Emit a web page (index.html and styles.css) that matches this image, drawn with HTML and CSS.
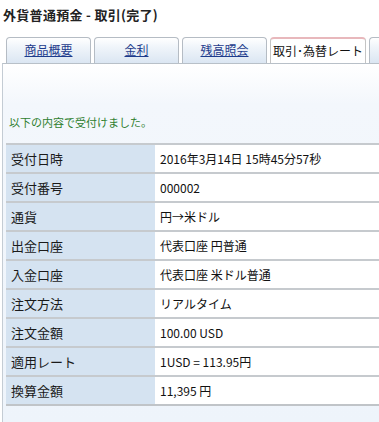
FILE: index.html
```html
<!DOCTYPE html>
<html lang="ja">
<head>
  <meta charset="UTF-8" />
  <title>外貨普通預金 - 取引(完了)</title>
  <link rel="stylesheet" href="styles.css">
</head>
<body>

  <h1 class="title">外貨普通預金 - 取引(完了)</h1>

  <ul class="tabs">
    <li class="tab"><a href="#">商品概要</a></li>
    <li class="tab"><a href="#">金利</a></li>
    <li class="tab"><a href="#">残高照会</a></li>
    <li class="tab active">取引･為替レート</li>
    <li class="tab more"></li>
  </ul>

  <div class="panel">
    <p class="message">以下の内容で受付けました。</p>

    <table class="detail">
      <tr><th>受付日時</th><td>2016年3月14日 15時45分57秒</td></tr>
      <tr><th>受付番号</th><td>000002</td></tr>
      <tr><th>通貨</th><td>円→米ドル</td></tr>
      <tr><th>出金口座</th><td>代表口座 円普通</td></tr>
      <tr><th>入金口座</th><td>代表口座 米ドル普通</td></tr>
      <tr><th>注文方法</th><td>リアルタイム</td></tr>
      <tr><th>注文金額</th><td>100.00 USD</td></tr>
      <tr><th>適用レート</th><td>1USD = 113.95円</td></tr>
      <tr><th>換算金額</th><td>11,395 円</td></tr>
    </table>
  </div>

</body>
</html>
```

FILE: styles.css
```css
* {
  box-sizing: border-box;
}

body {
  margin: 0;
  padding: 0;
  font-family: "Noto Sans CJK JP", "Liberation Sans", sans-serif;
  font-size: 12px;
  color: #111;
  background: #fff;
  overflow: hidden;
}

.title {
  margin: 0;
  padding: 7px 0 0 3px;
  height: 37px;
  font-size: 13px;
  font-weight: bold;
  line-height: 16px;
  letter-spacing: 0.3px;
  color: #222;
}

.tabs {
  list-style: none;
  margin: 0;
  padding: 0 0 0 6px;
  display: flex;
  gap: 3px;
  height: 26px;
  overflow: hidden;
  white-space: nowrap;
}

.tab {
  width: 85px;
  height: 26px;
  border: 1px solid #b5bcc4;
  border-bottom: none;
  border-radius: 4px 4px 0 0;
  background: linear-gradient(#ffffff, #f0f5fa 35%, #dbe6f2);
  text-align: center;
  line-height: 24px;
  font-size: 12px;
  flex-shrink: 0;
}

.tab a {
  color: #1d3b8c;
  text-decoration: underline;
}

.tab.active {
  width: 96px;
  height: 27px;
  background: #fff;
  border-color: #c4c4c4;
  border-top: 2px solid #e8b8bc;
  line-height: 23px;
  position: relative;
  z-index: 1;
}

.tab.more {
  width: 10px;
  flex-shrink: 1;
  border-radius: 4px 0 0 0;
  border-right: none;
}

.panel {
  border-top: 1px solid #b8c0c8;
  border-left: 1px solid #c4ccd4;
  margin-left: 2px;
  height: 359px;
  overflow: hidden;
  background: linear-gradient(#ffffff, #f3f7fc 40px, #eef4fb);
}

.message {
  margin: 0;
  padding: 50px 0 0 6px;
  height: 79px;
  color: #2f7f2f;
  font-size: 11px;
  line-height: 16px;
}

.detail {
  margin-left: 3px;
  width: calc(100% - 3px);
  border-collapse: collapse;
  border-bottom: 2px solid #c0c4c8;
}

.detail th,
.detail td {
  height: 29px;
  padding: 0 5px;
  border-top: 2px solid #c6cace;
  font-weight: normal;
  text-align: left;
  vertical-align: middle;
  line-height: 16px;
}

.detail th {
  width: 149px;
  background: #d5e3f1;
  font-size: 13px;
  color: #1a1a1a;
}

.detail td {
  background: #fff;
  font-size: 12px;
  color: #111;
}
```
